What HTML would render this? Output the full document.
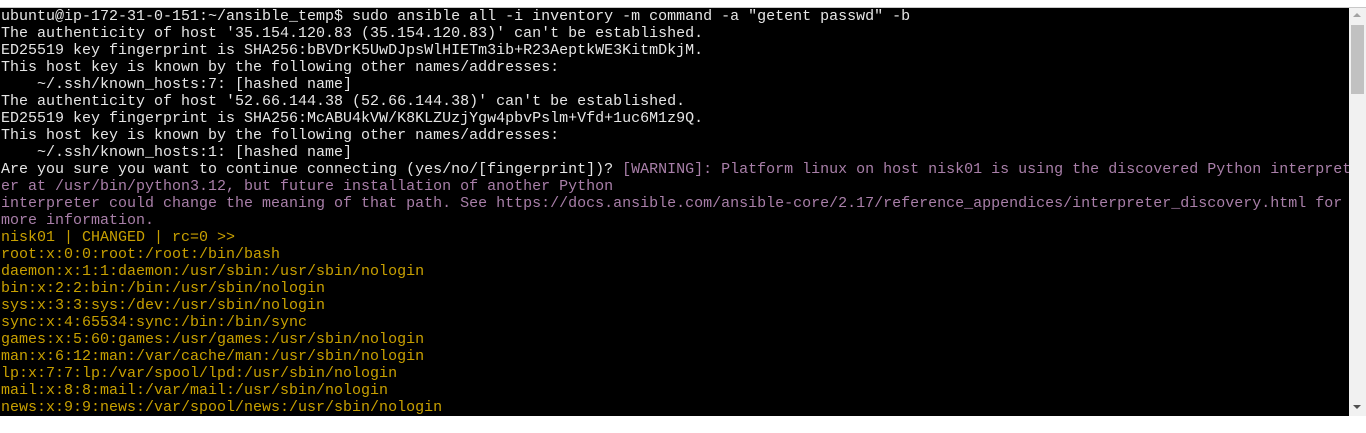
<!DOCTYPE html>
<html><head><meta charset="utf-8"><style>
html,body{margin:0;padding:0;width:1366px;height:433px;background:#fff;overflow:hidden}
#bar{position:absolute;left:0;top:7px;width:1366px;height:1px;background:#c8c8c8}
#term{position:absolute;left:0;top:8px;width:1349px;height:408px;background:#000;overflow:hidden}
pre{margin:0;padding:0 0 0 1px;font-family:"Liberation Mono",monospace;font-size:15px;line-height:17px;color:#e6e6e6;white-space:pre}
.p{color:#a97fa9}.y{color:#c8a000}
#sb{position:absolute;left:1349px;top:8px;width:17px;height:408px;background:#f1f1f1}
#th{position:absolute;left:2px;top:17px;width:13px;height:69px;background:#c1c1c1}
.up{position:absolute;left:4px;top:5px;width:0;height:0;border-left:4px solid transparent;border-right:4px solid transparent;border-bottom:4px solid #a3a3a3}
.dn{position:absolute;left:4px;top:397px;width:0;height:0;border-left:4px solid transparent;border-right:4px solid transparent;border-top:4px solid #505050}
</style></head><body>
<div id="bar"></div>
<div id="term"><pre>ubuntu@ip-172-31-0-151:~/ansible_temp$ sudo ansible all -i inventory -m command -a "getent passwd" -b
The authenticity of host '35.154.120.83 (35.154.120.83)' can't be established.
ED25519 key fingerprint is SHA256:bBVDrK5UwDJpsWlHIETm3ib+R23AeptkWE3KitmDkjM.
This host key is known by the following other names/addresses:
    ~/.ssh/known_hosts:7: [hashed name]
The authenticity of host '52.66.144.38 (52.66.144.38)' can't be established.
ED25519 key fingerprint is SHA256:McABU4kVW/K8KLZUzjYgw4pbvPslm+Vfd+1uc6M1z9Q.
This host key is known by the following other names/addresses:
    ~/.ssh/known_hosts:1: [hashed name]
Are you sure you want to continue connecting (yes/no/[fingerprint])? <span class="p">[WARNING]: Platform linux on host nisk01 is using the discovered Python interpret</span>
<span class="p">er at /usr/bin/python3.12, but future installation of another Python</span>
<span class="p">interpreter could change the meaning of that path. See https://docs.ansible.com/ansible-core/2.17/reference_appendices/interpreter_discovery.html for</span>
<span class="p">more information.</span>
<span class="y">nisk01 | CHANGED | rc=0 &gt;&gt;
root:x:0:0:root:/root:/bin/bash
daemon:x:1:1:daemon:/usr/sbin:/usr/sbin/nologin
bin:x:2:2:bin:/bin:/usr/sbin/nologin
sys:x:3:3:sys:/dev:/usr/sbin/nologin
sync:x:4:65534:sync:/bin:/bin/sync
games:x:5:60:games:/usr/games:/usr/sbin/nologin
man:x:6:12:man:/var/cache/man:/usr/sbin/nologin
lp:x:7:7:lp:/var/spool/lpd:/usr/sbin/nologin
mail:x:8:8:mail:/var/mail:/usr/sbin/nologin
news:x:9:9:news:/var/spool/news:/usr/sbin/nologin</span></pre></div>
<div id="sb"><div class="up"></div><div id="th"></div><div class="dn"></div></div>
</body></html>
